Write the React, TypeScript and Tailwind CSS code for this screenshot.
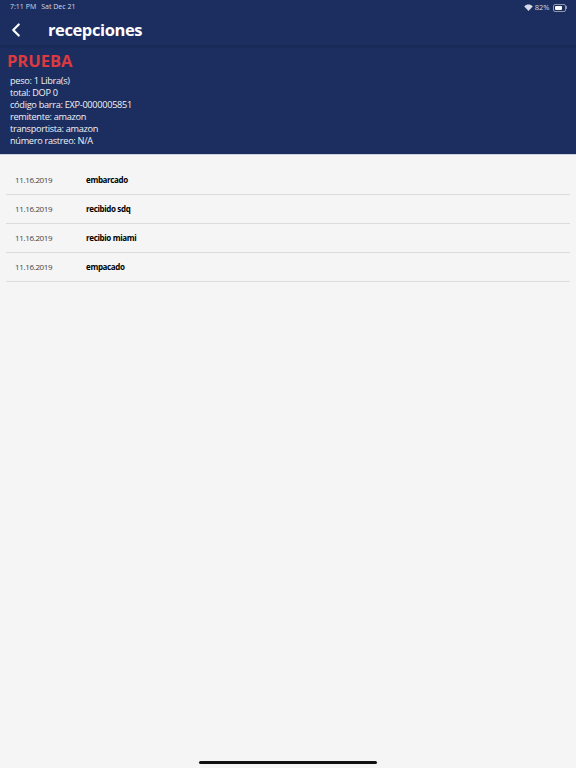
import { ChevronLeft } from 'lucide-react';

const details = [
  'peso: 1 Libra(s)',
  'total: DOP 0',
  'código barra: EXP-0000005851',
  'remitente: amazon',
  'transportista: amazon',
  'número rastreo: N/A',
];

const events = [
  { date: '11.16.2019', label: 'embarcado' },
  { date: '11.16.2019', label: 'recibido sdq' },
  { date: '11.16.2019', label: 'recibio miami' },
  { date: '11.16.2019', label: 'empacado' },
];

const WifiGlyph = () => (
  <svg width="9" height="7" viewBox="0 0 18 14" fill="currentColor">
    <path d="M9 14 L0.5 4.8 C5.5 0 12.5 0 17.5 4.8 Z" />
  </svg>
);

const Battery = () => (
  <div className="flex items-center">
    <div className="h-[8px] w-[13px] rounded-[2px] border border-white/50 p-[1px]">
      <div className="h-full w-[82%] rounded-[1px] bg-white" />
    </div>
    <div className="ml-[0.5px] h-[3px] w-[1px] bg-white/50" />
  </div>
);

export default function App() {
  return (
    <div className="flex h-[768px] flex-col overflow-hidden bg-[#f5f5f5] font-['Open_Sans',sans-serif]">
      <header className="h-[155px] shrink-0 border-b border-[#c9d0de] bg-[#1c2e5f] text-white">
        <div className="flex h-[14px] items-center justify-between pl-[10px] pr-[9px] pt-[1px] text-[7px] text-[#d5dae6]">
          <div className="flex gap-[5px]">
            <span>7:11 PM</span>
            <span>Sat Dec 21</span>
          </div>
          <div className="flex items-center gap-[2px]">
            <WifiGlyph />
            <span className="mr-[1px] text-[7.5px]">82%</span>
            <Battery />
          </div>
        </div>
        <div className="flex h-[32px] items-center border-b border-[#1a2a57] shadow-[0_1px_2px_rgba(0,0,0,0.12)]">
          <ChevronLeft className="ml-[5px] h-[22px] w-[22px]" strokeWidth={2.4} />
          <h1 className="ml-[21px] pt-[2px] text-[16.5px] font-bold leading-none tracking-[-0.4px]">recepciones</h1>
        </div>
        <div className="px-[7px] pt-[5px]">
          <h2 className="text-[16.5px] font-bold leading-[20px] text-[#dc3a40]">PRUEBA</h2>
          <ul className="ml-[3px] mt-[4px] text-[9.2px] leading-[12px] tracking-[-0.3px] text-[#f0f2f6]">
            {details.map((line) => (
              <li key={line}>{line}</li>
            ))}
          </ul>
        </div>
      </header>

      <main className="mt-[11px] px-[6px]">
        {events.map((event) => (
          <div
            key={event.label}
            className="flex h-[29px] items-center border-b border-[#dcdcdc] pl-[9px] text-[8px] tracking-[-0.35px]"
          >
            <span className="w-[71px] text-[#444444]">{event.date}</span>
            <span className="font-bold text-black">{event.label}</span>
          </div>
        ))}
      </main>

      <div className="mt-auto flex justify-center pb-[4px]">
        <div className="h-[3px] w-[178px] rounded-full bg-[#111111]" />
      </div>
    </div>
  );
}
